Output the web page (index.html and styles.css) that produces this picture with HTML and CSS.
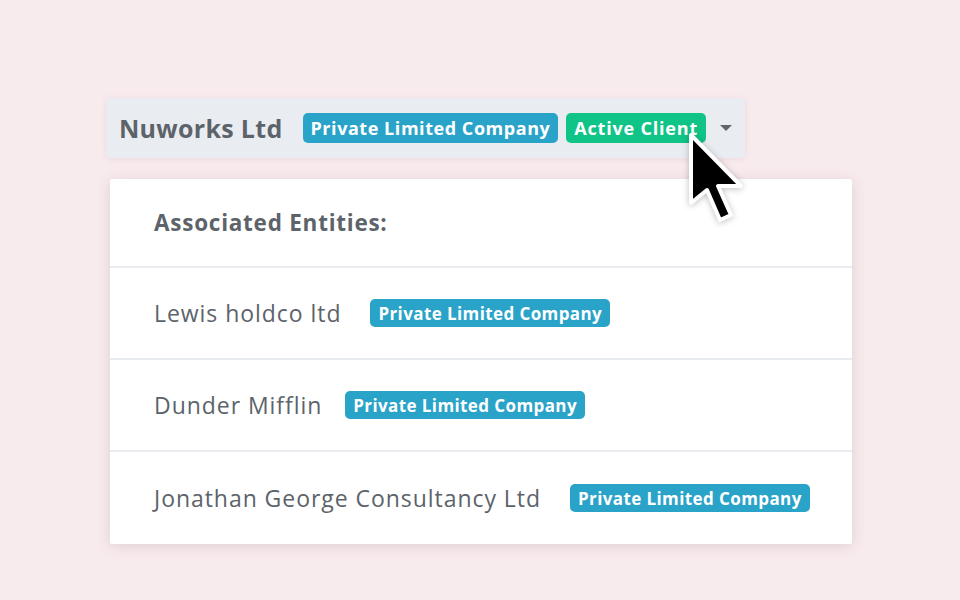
FILE: index.html
```html
<!DOCTYPE html>
<html>
<head>
<meta charset="utf-8">
<link rel="stylesheet" href="styles.css">
</head>
<body>
<div class="stage">
  <div class="head">
    <span class="head-name">Nuworks Ltd</span>
    <span class="badge badge-lg badge-blue">Private Limited Company</span>
    <span class="badge badge-lg badge-green gap-sm">Active Client</span>
    <span class="caret"></span>
  </div>
  <div class="panel">
    <div class="panel-title">Associated Entities:</div>
    <div class="row"><span class="row-name">Lewis holdco ltd</span><span class="badge badge-blue">Private Limited Company</span></div>
    <div class="row"><span class="row-name tight">Dunder Mifflin</span><span class="badge badge-blue">Private Limited Company</span></div>
    <div class="row"><span class="row-name">Jonathan George Consultancy Ltd</span><span class="badge badge-blue">Private Limited Company</span></div>
  </div>
  <svg class="cursor" width="64" height="100" viewBox="-4 -4 64 100">
    <path d="M0 0 L0 68 L16 55 L29 85 L40 80 L27 51 L50 51 Z" fill="#000" stroke="#fff" stroke-width="4" stroke-linejoin="round"/>
  </svg>
</div>
</body>
</html>
```
FILE: styles.css
```css
* { box-sizing: border-box; }
html, body { margin: 0; padding: 0; }
body {
  width: 960px;
  height: 600px;
  background: #f8ebee;
  font-family: "Open Sans", "Noto Sans", sans-serif;
  color: #5c636a;
  overflow: hidden;
}
.stage {
  position: relative;
  padding: 98px 0 0 106px;
  display: flex;
  flex-direction: column;
  align-items: flex-start;
}
.head {
  width: 639px;
  height: 60px;
  background: #e9edf2;
  border-radius: 4px;
  display: flex;
  align-items: center;
  padding-left: 13px;
  box-shadow: 0 1px 6px rgba(120, 80, 90, 0.12);
}
.head-name {
  font-size: 25px;
  font-weight: 700;
  color: #5c636a;
  margin-right: 20px;
  letter-spacing: 0.3px;
}
.badge {
  display: inline-flex;
  align-items: center;
  height: 28px;
  padding: 0 8px;
  border-radius: 5px;
  color: #fff;
  font-weight: 700;
  font-size: 17px;
  white-space: nowrap;
  letter-spacing: 0.4px;
}
.badge-lg {
  height: 30px;
  font-size: 18px;
  letter-spacing: 0.55px;
}
.badge-blue { background: #2aa3c9; }
.badge-green { background: #10c386; letter-spacing: 0.8px; }
.gap-sm { margin-left: 8px; }
.caret {
  margin-left: 14px;
  width: 0;
  height: 0;
  border-left: 6px solid transparent;
  border-right: 6px solid transparent;
  border-top: 6px solid #5f666d;
}
.panel {
  margin-top: 21px;
  margin-left: 4px;
  width: 742px;
  background: #fff;
  border-radius: 2px;
  box-shadow: 0 2px 14px rgba(90, 60, 70, 0.16);
}
.panel-title {
  height: 89px;
  display: flex;
  align-items: center;
  padding-left: 44px;
  font-size: 22.5px;
  font-weight: 700;
  color: #5c636a;
  border-bottom: 2px solid #e8ecf1;
  letter-spacing: 0.75px;
}
.row {
  height: 92px;
  display: flex;
  align-items: center;
  padding-left: 44px;
  border-bottom: 2px solid #e8ecf1;
}
.row:last-child { border-bottom: 0; }
.row-name {
  font-size: 23px;
  color: #5c636a;
  margin-right: 29px;
  letter-spacing: 0.95px;
}
.row-name.tight { margin-right: 23px; }
.cursor {
  position: absolute;
  left: 687px;
  top: 131px;
  filter: drop-shadow(0 1px 3px rgba(0, 0, 0, 0.25));
}
```
